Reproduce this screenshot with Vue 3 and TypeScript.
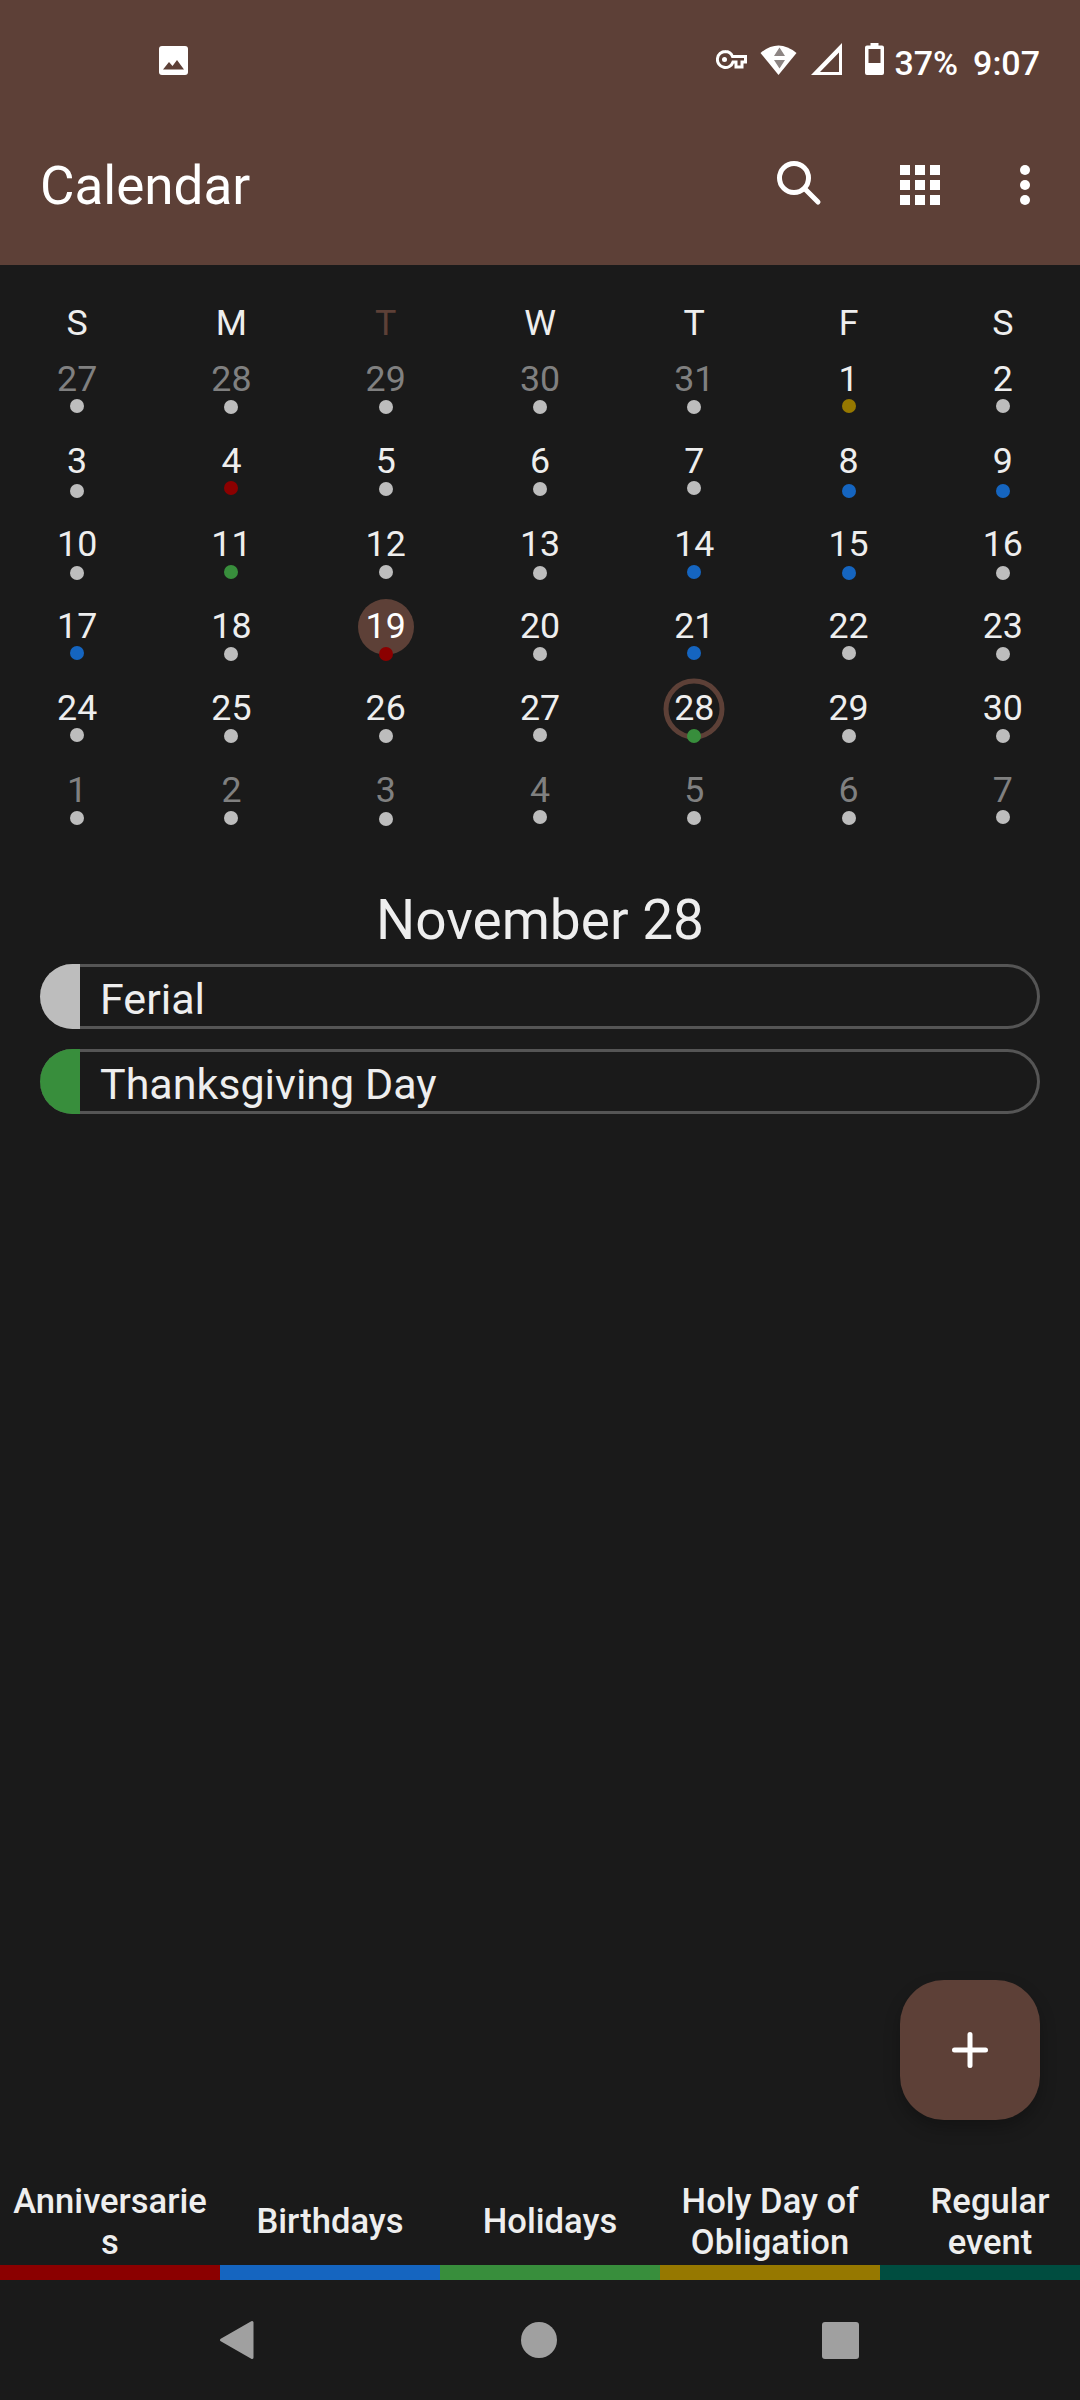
<script setup lang="ts">
interface Day { n: number; muted?: boolean; color?: string; selected?: boolean; today?: boolean; dotTop: number }
const RED = '#8b0000', BLUE = '#1565c0', GREEN = '#388e3c', GOLD = '#967800', TEAL = '#004d40'
const weekdays = ['S', 'M', 'T', 'W', 'T', 'F', 'S']
const colored: Record<number, string> = { 1: GOLD, 4: RED, 8: BLUE, 9: BLUE, 11: GREEN, 14: BLUE, 15: BLUE, 17: BLUE, 19: RED, 21: BLUE, 28: GREEN }
// Each dot sits a pixel or so higher or lower depending on the day; values are its nudge in px.
const nudges = [
  -1.3, 0, 0, 0, 0, -1.3, -1.3,
  1.300, -1, 0, 0, -1, 1.300, 1.300,
  1, 0, 0, 1, 0, 1, 1,
  -1, 0, 0, 0, -1, -1, 0,
  -1.3, 0, 0, -1.3, 0, 0, 0,
  0, 0, 1, -1.3, 0, 0, -1.3,
]
const base: Omit<Day, 'dotTop'>[] = []
for (const n of [27, 28, 29, 30, 31]) base.push({ n, muted: true })
for (let n = 1; n <= 30; n++) base.push({ n, color: colored[n], selected: n === 19, today: n === 28 })
for (let n = 1; n <= 7; n++) base.push({ n, muted: true })
const days: Day[] = base.map((d, i) => ({ ...d, dotTop: nudges[i] }))
const events = [
  { name: 'Ferial', color: '#bdbdbd' },
  { name: 'Thanksgiving Day', color: GREEN },
]
const legend = [
  { name: 'Anniversaries', color: RED },
  { name: 'Birthdays', color: BLUE },
  { name: 'Holidays', color: GREEN },
  { name: 'Holy Day of Obligation', color: GOLD },
  { name: 'Regular event', color: TEAL },
]
</script>

<template>
  <div class="phone">
    <header class="header">
      <div class="status">
        <svg class="s-image" width="29" height="32" viewBox="0 0 29 32">
          <rect y="3" width="29" height="29" rx="3" fill="#fff" />
          <path d="M4 26.500 10 19l3.500 4L18 17l7 9.500z" fill="#5d4037" />
        </svg>
        <div class="status-spacer"></div>
        <svg class="s-key" width="31" height="32" viewBox="0 0 31 32">
          <path d="M9.500 8.500a8 8 0 1 0 7.500 10.500h3v5h6v-5h3.500v-5.500h-13a8 8 0 0 0-7.500-5z" fill="none" stroke="#fff" stroke-width="3" />
          <circle cx="8.500" cy="16.500" r="2.500" fill="#fff" />
        </svg>
        <svg class="s-wifi" width="37" height="32" viewBox="0 0 37 32">
          <path d="M0.500 10Q18.500-5 36.500 10L18.500 32z" fill="#fff" />
          <path d="M19.500 4.500l5.500 8.500h-11zM14 17h11l-5.500 8.500z" fill="#8d8583" />
        </svg>
        <svg class="s-signal" width="31" height="32" viewBox="0 0 31 32">
          <path fill-rule="evenodd" d="M0 32 31 0v32zM9 29h19V9.500z" fill="#fff" />
        </svg>
        <svg class="s-battery" width="19" height="32" viewBox="0 0 19 32">
          <path fill-rule="evenodd" d="M5.500 0h8v2.500h3.500a2 2 0 0 1 2 2V30a2 2 0 0 1-2 2H2a2 2 0 0 1-2-2V4.500a2 2 0 0 1 2-2h3.500zM3.500 6v14h12V6z" fill="#fff" />
        </svg>
        <span class="s-text s-pct">37%</span>
        <span class="s-text s-time">9:07</span>
      </div>
      <div class="toolbar">
        <span class="title">Calendar</span>
        <svg class="t-search" width="60" height="60" viewBox="0 0 60 60">
          <circle cx="26" cy="23" r="14.500" fill="none" stroke="#fff" stroke-width="5" />
          <path d="M37 34 50 47" stroke="#fff" stroke-width="5" stroke-linecap="round" />
        </svg>
        <svg class="t-grid" width="60" height="60" viewBox="0 0 60 60" fill="#fff">
          <rect x="10" y="10" width="10" height="10" /><rect x="25" y="10" width="10" height="10" /><rect x="40" y="10" width="10" height="10" />
          <rect x="10" y="25" width="10" height="10" /><rect x="25" y="25" width="10" height="10" /><rect x="40" y="25" width="10" height="10" />
          <rect x="10" y="40" width="10" height="10" /><rect x="25" y="40" width="10" height="10" /><rect x="40" y="40" width="10" height="10" />
        </svg>
        <svg class="t-more" width="60" height="60" viewBox="0 0 60 60" fill="#fff">
          <circle cx="30" cy="15" r="5" /><circle cx="30" cy="30" r="5" /><circle cx="30" cy="45" r="5" />
        </svg>
      </div>
    </header>

    <div class="weekdays">
      <span v-for="(w, i) in weekdays" :key="i" class="weekday" :class="{ current: i === 2 }">{{ w }}</span>
    </div>

    <div class="month">
      <div v-for="(d, i) in days" :key="i" class="cell">
        <span class="num" :class="{ muted: d.muted, selected: d.selected, today: d.today }">{{ d.n }}</span>
        <span class="dot" :style="{ background: d.color ?? '#bdbdbd', marginTop: d.dotTop + 'px' }"></span>
      </div>
    </div>

    <h2 class="date">November 28</h2>

    <div class="events">
      <div v-for="e in events" :key="e.name" class="event">
        <span class="cap" :style="{ background: e.color }"></span>
        <span class="event-name">{{ e.name }}</span>
      </div>
    </div>

    <div class="grow"></div>

    <div class="legend">
      <div v-for="l in legend" :key="l.name" class="legend-item">
        <span class="legend-label">{{ l.name }}</span>
        <span class="legend-bar" :style="{ background: l.color }"></span>
      </div>
    </div>

    <nav class="nav">
      <svg width="36" height="40" viewBox="0 0 36 40"><path d="M33 2.500V37.500L2.500 20z" fill="#a0a0a0" stroke="#a0a0a0" stroke-width="3" stroke-linejoin="round" /></svg>
      <span class="nav-circle"></span>
      <span class="nav-square"></span>
    </nav>

    <button class="fab" type="button" aria-label="Add">
      <svg width="36" height="36" viewBox="0 0 36 36"><path d="M18 2.500v31M2.500 18h31" stroke="#fff" stroke-width="5" stroke-linecap="round" /></svg>
    </button>
  </div>
</template>

<style>
html, body { margin: 0; background: #1a1a1a; }
</style>

<style scoped>
.phone {
  position: relative;
  width: 1080px;
  height: 2400px;
  overflow: hidden;
  display: flex;
  flex-direction: column;
  background: #1a1a1a;
  color: #eeeeee;
  font-family: Roboto, "Liberation Sans", sans-serif;
}
.header { height: 265px; background: #5d4037; flex: none; color: #fff; }
.status { display: flex; align-items: flex-start; height: 101px; box-sizing: border-box; padding: 43px 40px 0 159px; }
.status-spacer { flex: 1; }
.s-wifi { margin-left: 13px; }
.s-signal { margin-left: 14px; }
.s-battery { margin-left: 23px; }
.s-text { font-size: 34px; font-weight: 500; line-height: 32px; height: 32px; padding-top: 4px; box-sizing: border-box; }
.s-pct { margin-left: 10px; }
.s-time { margin-left: 15px; }
.toolbar { display: flex; align-items: center; height: 164px; box-sizing: border-box; padding: 4px 25px 0 40px; }
.title { flex: 1; font-size: 53px; line-height: 64px; padding-top: 2px; }
.t-grid { margin-left: 62px; }
.t-more { margin-left: 45px; }

.weekdays { display: grid; grid-template-columns: repeat(7, 1fr); margin-top: 37px; margin-bottom: 14px; flex: none; }
.weekday { text-align: center; font-size: 35.750px; line-height: 42px; }
.weekday.current { color: #5d4037; }

.month { display: grid; grid-template-columns: repeat(7, 1fr); grid-auto-rows: 82.260px; flex: none; }
.cell { display: flex; flex-direction: column; align-items: center; position: relative; }
.num { position: relative; font-size: 35.750px; line-height: 42px; z-index: 0; }
.num.muted { color: #808080; }
.num.selected { color: #fff; }
.num.selected::before, .num.today::before {
  content: "";
  position: absolute;
  left: 50%;
  top: 50%;
  border-radius: 50%;
  transform: translate(-50%, -50%);
  z-index: -1;
  box-sizing: border-box;
}
.num.selected::before { width: 56px; height: 56px; margin-top: 1px; background: #5d4037; }
.num.today::before { width: 61px; height: 61px; margin-top: 1px; border: 5px solid #5d4037; }
.dot { width: 14px; height: 14px; border-radius: 50%; position: relative; }

.date { margin: 25px 0 0; text-align: center; font-size: 55px; line-height: 87.400px; font-weight: 400; flex: none; color: #eeeeee; }
.events { display: flex; flex-direction: column; gap: 20px; padding: 0 40px; flex: none; }
.event {
  height: 65px;
  box-sizing: border-box;
  border: 3px solid #555555;
  border-left: 0;
  border-radius: 32.500px;
  display: flex;
  align-items: center;
  position: relative;
  padding-left: 60px;
}
.cap { position: absolute; left: 0; top: -3px; bottom: -3px; width: 40px; border-radius: 32.500px 0 0 32.500px; }
.event-name { font-size: 43px; line-height: 50px; padding-top: 6px; }
.grow { flex: 1; }

.legend { display: flex; flex: none; }
.legend-item { flex: none; width: 220px; display: flex; flex-direction: column; }
.legend-label {
  height: 85px;
  display: flex;
  align-items: center;
  justify-content: center;
  text-align: center;
  padding: 0 11px 2px;
  box-sizing: border-box;
  font-size: 34.600px;
  line-height: 41px;
  font-weight: 500;
  overflow-wrap: anywhere;
}
.legend-bar { height: 15px; }
.nav { height: 120px; flex: none; display: flex; align-items: center; justify-content: space-between; padding: 0 221px 0 219px; }
.nav-circle { width: 36px; height: 36px; border-radius: 50%; background: #a0a0a0; }
.nav-square { width: 37px; height: 37px; border-radius: 3px; background: #a0a0a0; }
.fab {
  position: absolute;
  left: 900px;
  top: 1980px;
  width: 140px;
  height: 140px;
  border: 0;
  padding: 0;
  border-radius: 44px;
  background: #5d4037;
  display: flex;
  align-items: center;
  justify-content: center;
  box-shadow: 0 8px 16px rgba(0, 0, 0, 0.25);
}
</style>
